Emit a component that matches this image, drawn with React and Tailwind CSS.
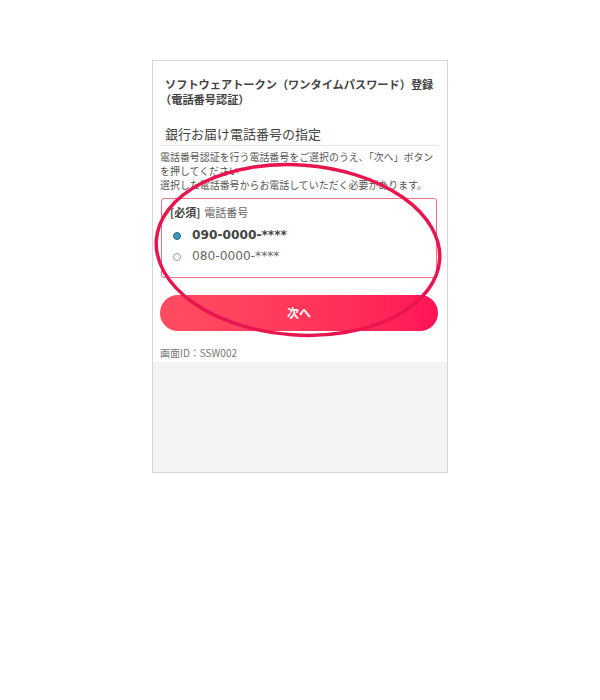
import React from "react";

export default function App() {
  const font = { fontFamily: '"DejaVu Sans", "Noto Sans CJK JP", sans-serif' };
  return (
    <div className="relative w-[600px] h-[700px] bg-white" style={font}>
      <div className="ml-[152px] pt-[60px]">
        <div className="w-[296px] h-[413px] border border-[#d6d6d6] flex flex-col">
          <div className="bg-white pl-[7px] pr-[9px] pb-[2px]">
            <div className="pl-[5px] pt-[16px] text-[11.2px] leading-[15px] font-bold text-[#444] font-['Noto_Sans_CJK_JP',sans-serif]">
              <div className="whitespace-nowrap">ソフトウェアトークン（ワンタイムパスワード）登録</div>
              <div className="-ml-[5px]">（電話番号認証）</div>
            </div>
            <div className="mt-[18px] pl-[5px] pb-[2px] border-b border-[#e6e6e6] text-[13px] leading-[18px] text-[#444] font-['Noto_Sans_CJK_JP',sans-serif]">
              銀行お届け電話番号の指定
            </div>
            <div className="mt-[4px] text-[9.95px] leading-[14px] text-[#555] whitespace-nowrap font-['Noto_Sans_CJK_JP',sans-serif]">
              <div>電話番号認証を行う電話番号をご選択のうえ、「次へ」ボタン</div>
              <div>を押してください</div>
              <div>選択した電話番号からお電話していただく必要があります。</div>
            </div>
            <div className="mt-[6px] mx-[1px] h-[80px] border border-[#ea7384] rounded-[3px] bg-white pt-[5px] pl-[8px]">
              <div className="text-[11px] leading-[16px] text-[#444] font-['Noto_Sans_CJK_JP',sans-serif]">
                <span className="font-bold">[必須]</span>
                <span className="ml-[4px] text-[#666]">電話番号</span>
              </div>
              <div className="mt-[7px] flex items-center h-[17px]">
                <span className="ml-[3px] w-[8px] h-[8px] rounded-full bg-[#3d9ac4] border border-[#2c5f78]"></span>
                <span className="ml-[11px] text-[12.2px] font-bold text-[#444]">090-0000-****</span>
              </div>
              <div className="mt-[4px] flex items-center h-[17px]">
                <span className="ml-[3px] w-[8px] h-[8px] rounded-full bg-white border border-[#999]"></span>
                <span className="ml-[11px] text-[12.2px] text-[#666]">080-0000-****</span>
              </div>
            </div>
            <div className="mt-[17px] h-[36px] rounded-full bg-linear-to-r from-[#ff4d60] to-[#ff1257] flex items-center justify-center">
              <span className="text-white text-[12px] font-bold font-['Noto_Sans_CJK_JP',sans-serif]">次へ</span>
            </div>
            <div className="mt-[15px] text-[10px] leading-[14px] text-[#777] font-['Noto_Sans_CJK_JP',sans-serif]">
              画面ID：SSW002
            </div>
          </div>
          <div className="flex-1 bg-[#f4f4f4]"></div>
        </div>
      </div>
      <svg className="absolute left-0 top-0 pointer-events-none" width="600" height="700">
        <ellipse cx="298" cy="250" rx="142" ry="85" fill="none" stroke="#e8154f" strokeWidth="3.5" transform="rotate(4 298 250)" />
      </svg>
    </div>
  );
}
